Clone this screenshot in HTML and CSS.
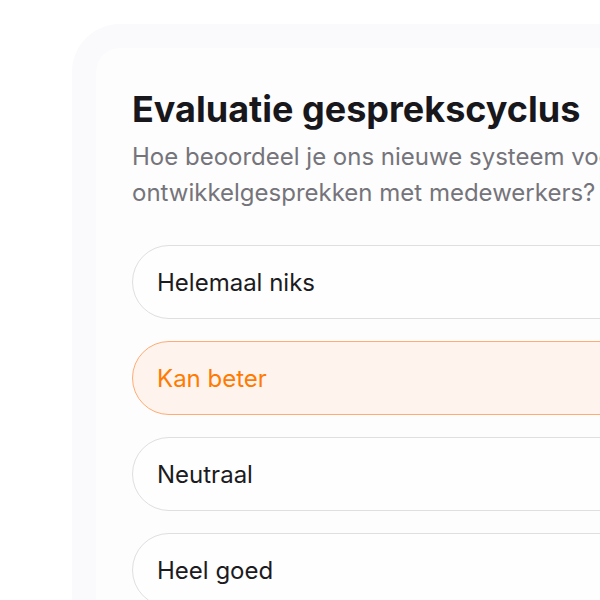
FILE: index.html
```html
<!DOCTYPE html>
<html lang="nl">
<head>
<meta charset="utf-8">
<link rel="stylesheet" href="styles.css">
</head>
<body>
<div class="stage">
  <div class="frame">
    <div class="card">
      <h1 class="title">Evaluatie gesprekscyclus</h1>
      <p class="subtitle">Hoe beoordeel je ons nieuwe systeem voor ontwikkelgesprekken met medewerkers?</p>
      <div class="options">
        <div class="option">Helemaal niks</div>
        <div class="option selected">Kan beter</div>
        <div class="option">Neutraal</div>
        <div class="option">Heel goed</div>
      </div>
    </div>
  </div>
</div>
</body>
</html>
```
FILE: styles.css
```css
html, body {
  margin: 0;
  padding: 0;
  background: #ffffff;
  overflow: hidden;
  width: 600px;
  height: 600px;
}
.stage {
  padding: 24px 0 0 72px;
  font-family: Inter, "Noto Sans", sans-serif;
}
.frame {
  width: 700px;
  background: #faf9fb;
  border-radius: 48px;
  padding: 24px;
}
.card {
  background: #fdfdfd;
  border-radius: 24px;
  padding: 39px 0 40px 36px;
}
.title {
  margin: 0;
  font-size: 36px;
  line-height: 44px;
  font-weight: 700;
  color: #18171c;
  white-space: nowrap;
}
.subtitle {
  margin: 8px 0 0 0;
  width: 500px;
  font-size: 24px;
  line-height: 36px;
  color: #75747b;
}
.options {
  margin-top: 34px;
  display: flex;
  flex-direction: column;
  gap: 22px;
}
.option {
  height: 72px;
  border: 1px solid #dfdee1;
  border-radius: 37px;
  background: #fefefe;
  display: flex;
  align-items: center;
  padding-left: 24px;
  font-size: 24px;
  color: #1c1b1f;
}
.option.selected {
  background: #fff3ee;
  border-color: #ffab73;
  color: #ff7a00;
}
```
